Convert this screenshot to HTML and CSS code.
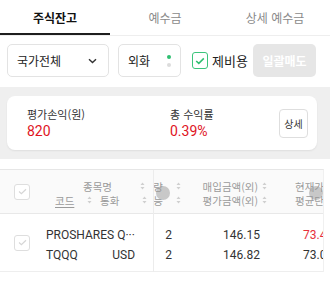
FILE: index.html
```html
<!DOCTYPE html>
<html lang="ko">
<head>
<meta charset="utf-8">
<link rel="stylesheet" href="styles.css">
</head>
<body>
<div class="tabs">
  <div class="tab active">주식잔고</div>
  <div class="tab">예수금</div>
  <div class="tab">상세 예수금</div>
</div>

<div class="filters">
  <div class="select">
    <span>국가전체</span>
    <svg class="chev" width="9" height="6" viewBox="0 0 9 6"><path d="M1 1.2 L4.5 4.6 L8 1.2" fill="none" stroke="#333" stroke-width="1.4"/></svg>
  </div>
  <div class="currency">
    <span>외화</span>
    <span class="dots"><i class="on"></i><i></i></span>
  </div>
  <label class="check">
    <span class="box"><svg width="10" height="8" viewBox="0 0 10 8"><path d="M1.2 4 L3.8 6.4 L8.8 1.4" fill="none" stroke="#2fbf71" stroke-width="1.5"/></svg></span>
    <span>제비용</span>
  </label>
  <button class="sell">일괄매도</button>
</div>

<div class="summary">
  <div class="card">
    <div class="stat first">
      <div class="label">평가손익(원)</div>
      <div class="value">820</div>
    </div>
    <div class="stat">
      <div class="label">총 수익률</div>
      <div class="value">0.39%</div>
    </div>
    <button class="detail">상세</button>
  </div>
</div>

<div class="table">
  <div class="fixed">
    <div class="th fixed-th">
      <div class="cbcell"><span class="cb"><svg width="9" height="7" viewBox="0 0 9 7"><path d="M1 3.5 L3.4 5.6 L8 1.2" fill="none" stroke="#d6d6d6" stroke-width="1.2"/></svg></span></div>
      <div class="namehead">
        <div class="nh1"><span>종목명</span><svg class="sort" width="5" height="8" viewBox="0 0 5 8"><path d="M2.5 0.5 L4.5 3 L0.5 3 Z M2.5 7.5 L4.5 5 L0.5 5 Z" fill="#cfcfcf"/></svg></div>
        <div class="nh2">
          <div class="sub code"><span class="u">코드</span><svg class="sort" width="5" height="8" viewBox="0 0 5 8"><path d="M2.5 0.5 L4.5 3 L0.5 3 Z M2.5 7.5 L4.5 5 L0.5 5 Z" fill="#cfcfcf"/></svg></div>
          <div class="sub cur"><span>통화</span><svg class="sort" width="5" height="8" viewBox="0 0 5 8"><path d="M2.5 0.5 L4.5 3 L0.5 3 Z M2.5 7.5 L4.5 5 L0.5 5 Z" fill="#cfcfcf"/></svg></div>
        </div>
      </div>
    </div>
    <div class="td fixed-td">
      <div class="cbcell"><span class="cb"><svg width="9" height="7" viewBox="0 0 9 7"><path d="M1 3.5 L3.4 5.6 L8 1.2" fill="none" stroke="#d6d6d6" stroke-width="1.2"/></svg></span></div>
      <div class="namecell">
        <div class="nm">PROSHARES Q···</div>
        <div class="cd"><span>TQQQ</span><span>USD</span></div>
      </div>
    </div>
  </div>
  <div class="scroll">
    <div class="inner">
      <div class="col qty">
        <div class="th">
          <div class="hl"><span>수량</span><svg class="sort" width="5" height="8" viewBox="0 0 5 8"><path d="M2.5 0.5 L4.5 3 L0.5 3 Z M2.5 7.5 L4.5 5 L0.5 5 Z" fill="#cfcfcf"/></svg></div>
          <div class="hl"><span>매도가능</span><svg class="sort" width="5" height="8" viewBox="0 0 5 8"><path d="M2.5 0.5 L4.5 3 L0.5 3 Z M2.5 7.5 L4.5 5 L0.5 5 Z" fill="#cfcfcf"/></svg></div>
        </div>
        <div class="td num"><div>2</div><div>2</div></div>
      </div>
      <div class="col amt">
        <div class="th">
          <div class="hl"><span>매입금액(외)</span><svg class="sort" width="5" height="8" viewBox="0 0 5 8"><path d="M2.5 0.5 L4.5 3 L0.5 3 Z M2.5 7.5 L4.5 5 L0.5 5 Z" fill="#cfcfcf"/></svg></div>
          <div class="hl"><span>평가금액(외)</span><svg class="sort" width="5" height="8" viewBox="0 0 5 8"><path d="M2.5 0.5 L4.5 3 L0.5 3 Z M2.5 7.5 L4.5 5 L0.5 5 Z" fill="#cfcfcf"/></svg></div>
        </div>
        <div class="td num"><div>146.15</div><div>146.82</div></div>
      </div>
      <div class="col price">
        <div class="th">
          <div class="hl"><span>현재가</span><svg class="sort" width="5" height="8" viewBox="0 0 5 8"><path d="M2.5 0.5 L4.5 3 L0.5 3 Z M2.5 7.5 L4.5 5 L0.5 5 Z" fill="#cfcfcf"/></svg></div>
          <div class="hl"><span>평균단가</span><svg class="sort" width="5" height="8" viewBox="0 0 5 8"><path d="M2.5 0.5 L4.5 3 L0.5 3 Z M2.5 7.5 L4.5 5 L0.5 5 Z" fill="#cfcfcf"/></svg></div>
        </div>
        <div class="td num"><div class="red">73.45</div><div>73.08</div></div>
      </div>
    </div>
  </div>
  <span class="hint left"></span>
  <span class="hint right"></span>
</div>
</body>
</html>
```

FILE: styles.css
```css
* { box-sizing: border-box; }
body {
  margin: 0;
  background: #fff;
  font-family: "Noto Sans CJK KR", "Noto Sans", sans-serif;
  color: #222;
  width: 330px;
}

.tabs {
  display: flex;
  height: 36px;
  border-bottom: 1px solid #eeeeee;
}
.tab {
  flex: 1;
  height: 35px;
  display: flex;
  align-items: center;
  justify-content: center;
  font-size: 12px;
  color: #8a8a8a;
}
.tab.active {
  color: #111;
  font-weight: 700;
  box-shadow: inset 0 -2px 0 #1e1e1e;
}

.filters {
  display: flex;
  align-items: center;
  padding: 8px 14px 10px 7px;
}
.select, .currency {
  height: 33px;
  border: 1px solid #e3e3e3;
  border-radius: 5px;
  display: flex;
  align-items: center;
  font-size: 12px;
  color: #222;
}
.select {
  width: 102px;
  padding: 0 11px 0 9px;
  justify-content: space-between;
}
.currency {
  width: 63px;
  margin-left: 9px;
  padding: 0 9px 0 9px;
  justify-content: space-between;
}
.dots {
  display: flex;
  flex-direction: column;
  gap: 4px;
}
.dots i {
  width: 4px;
  height: 4px;
  border-radius: 50%;
  background: #dcdcdc;
}
.dots i.on { background: #2fbf71; }
.check {
  display: flex;
  align-items: center;
  margin-left: 11px;
  gap: 4px;
  font-size: 13px;
  color: #222;
}
.box {
  width: 16px;
  height: 17px;
  border: 1.5px solid #3cc47c;
  border-radius: 3px;
  display: flex;
  align-items: center;
  justify-content: center;
}
.sell {
  margin-left: auto;
  width: 63px;
  height: 33px;
  border: none;
  border-radius: 5px;
  background: #e6e6e6;
  color: #fff;
  font-family: inherit;
  font-weight: 700;
  font-size: 12px;
  padding: 0;
}

.summary {
  background: #efefef;
  padding: 9px 13px 9px 7px;
}
.card {
  height: 54px;
  background: #fff;
  border-radius: 8px;
  box-shadow: 0 1px 2px rgba(0,0,0,0.07);
  display: flex;
  align-items: center;
  padding: 0 9px 0 20px;
}
.stat {
  display: flex;
  flex-direction: column;
}
.stat.first { width: 143px; }
.label {
  font-size: 11px;
  line-height: 16px;
  color: #333;
}
.value {
  font-family: Roboto, "Noto Sans", sans-serif;
  font-size: 14px;
  line-height: 19px;
  color: #e0141e;
}
.detail {
  margin-left: auto;
  width: 29px;
  height: 29px;
  border: 1px solid #dedede;
  border-radius: 4px;
  background: #fff;
  font-family: inherit;
  font-size: 10px;
  color: #333;
  padding: 0;
}

.table {
  margin-top: 10px;
  width: 324px;
  border-top: 1px solid #e6e6e6;
  border-right: 1px solid #f0f0f0;
  display: flex;
  position: relative;
}
.th {
  height: 44px;
  background: #fafafa;
  border-bottom: 1px solid #e8e8e8;
  color: #9a9a9a;
  font-size: 10.5px;
}
.td {
  height: 58px;
  border-bottom: 1px solid #eeeeee;
  font-size: 12px;
  color: #333;
}
.fixed {
  width: 154px;
  flex: none;
  border-right: 1px solid #ececec;
}
.fixed-th, .fixed-td {
  display: flex;
}
.cbcell {
  width: 40px;
  display: flex;
  align-items: center;
  justify-content: center;
  padding-left: 4px;
}
.cb {
  width: 16px;
  height: 16px;
  border: 1px solid #dedede;
  border-radius: 3px;
  background: #fff;
  display: flex;
  align-items: center;
  justify-content: center;
}
.namehead {
  flex: 1;
  padding: 9px 0 0 0;
}
.nh1 {
  height: 14px;
  display: flex;
  align-items: center;
  justify-content: flex-end;
  padding-right: 8px;
  gap: 28px;
}
.nh2 {
  height: 14px;
  display: flex;
}
.sub {
  display: flex;
  align-items: center;
}
.sub.code {
  width: 55px;
  padding-left: 15px;
  gap: 13px;
}
.sub.cur {
  padding-left: 5px;
  gap: 23px;
}
.u {
  text-decoration: underline;
  text-underline-offset: 2px;
}
.sort { flex: none; }
.namecell {
  flex: 1;
  padding: 11px 18px 0 6px;
  font-family: Roboto, "Noto Sans", sans-serif;
  line-height: 20px;
}
.cd {
  display: flex;
  justify-content: space-between;
}

.scroll {
  flex: 1;
  overflow: hidden;
}
.inner {
  display: flex;
  margin-left: -28px;
}
.col { flex: none; }
.col .th {
  padding-top: 9px;
}
.hl {
  height: 14px;
  display: flex;
  align-items: center;
  justify-content: flex-end;
  white-space: nowrap;
}
.num {
  padding-top: 11px;
  line-height: 20px;
  font-family: Roboto, "Noto Sans", sans-serif;
  text-align: right;
}
.qty { width: 60px; }
.qty .hl { padding-right: 5px; gap: 13px; }
.qty .num { padding-right: 14px; }
.amt { width: 88px; }
.amt .hl { padding-right: 7px; gap: 4px; }
.amt .num { padding-right: 14px; }
.price { width: 90px; }
.price .hl { justify-content: flex-start; padding-left: 21px; gap: 4px; }
.price .num { text-align: left; padding-left: 29px; }
.red { color: #e6303a; }

.hint {
  position: absolute;
  top: 16px;
  width: 14px;
  height: 14px;
  border-radius: 50%;
  background: rgba(150,150,150,0.5);
}
.hint.left { left: 156px; }
.hint.right { left: 309px; }
```
